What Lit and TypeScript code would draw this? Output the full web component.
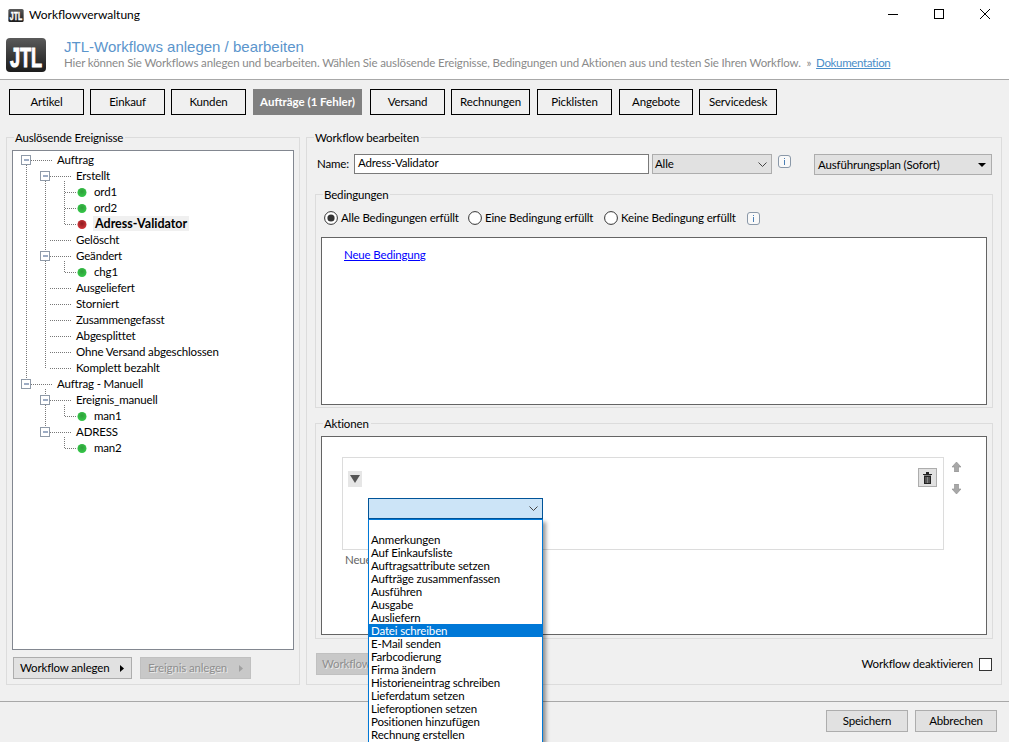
import { LitElement, html, css, svg } from "lit";
import { customElement } from "lit/decorators.js";

interface Row { t: string; l: number; dot?: "g" | "r"; bold?: boolean; }
const rows: Row[] = [
  { t: "Auftrag", l: 0 }, { t: "Erstellt", l: 1 },
  { t: "ord1", l: 2, dot: "g" }, { t: "ord2", l: 2, dot: "g" },
  { t: "Adress-Validator", l: 2, dot: "r", bold: true },
  { t: "Gelöscht", l: 1 }, { t: "Geändert", l: 1 }, { t: "chg1", l: 2, dot: "g" },
  { t: "Ausgeliefert", l: 1 }, { t: "Storniert", l: 1 }, { t: "Zusammengefasst", l: 1 },
  { t: "Abgesplittet", l: 1 }, { t: "Ohne Versand abgeschlossen", l: 1 }, { t: "Komplett bezahlt", l: 1 },
  { t: "Auftrag - Manuell", l: 0 }, { t: "Ereignis_manuell", l: 1 }, { t: "man1", l: 2, dot: "g" },
  { t: "ADRESS", l: 1 }, { t: "man2", l: 2, dot: "g" },
];
const expanders: [number, number][] = [[13, 9], [32, 25], [32, 105], [13, 233], [32, 249], [32, 281]];
const tabs = ["Artikel", "Einkauf", "Kunden", "Aufträge (1 Fehler)", "Versand", "Rechnungen", "Picklisten", "Angebote", "Servicedesk"];
const tabW = [75, 75, 75, 109, 75, 79, 75, 74, 78];
const tabGap = [0, 6, 6, 7, 8, 6, 7, 7, 6];
const items = ["", "Anmerkungen", "Auf Einkaufsliste", "Auftragsattribute setzen", "Aufträge zusammenfassen", "Ausführen", "Ausgabe", "Ausliefern", "Datei schreiben", "E-Mail senden", "Farbcodierung", "Firma ändern", "Historieneintrag schreiben", "Lieferdatum setzen", "Lieferoptionen setzen", "Positionen hinzufügen", "Rechnung erstellen"];

const logo = (w: number, h: number) => html`<svg width=${w} height=${h} viewBox="0 0 40 34">
  <defs><linearGradient id="lg" x1="0" y1="0" x2="0" y2="1"><stop offset="0" stop-color="#5a5a5a"/><stop offset=".5" stop-color="#3a3a3a"/><stop offset="1" stop-color="#1c1c1c"/></linearGradient></defs>
  <rect width="40" height="34" rx="4" fill="url(#lg)"/>
  <text x="20" y="29" text-anchor="middle" textLength="32" lengthAdjust="spacingAndGlyphs" font-family="Liberation Sans, sans-serif" font-weight="700" font-size="28" fill="#fff" stroke="#fff" stroke-width="1">JTL</text>
</svg>`;

const info = html`<svg class="info" width="15" height="15" viewBox="0 0 15 15"><rect x="1.5" y="1.5" width="12" height="12" rx="2.5" fill="#fff" fill-opacity=".6" stroke="#8a98a8"/><rect x="7" y="4" width="1" height="1" fill="#4a7fb5"/><rect x="7" y="6" width="1" height="5" fill="#4a7fb5"/></svg>`;
const chev = html`<svg width="9" height="5" viewBox="0 0 9 5"><path d="M.5.5 4.5 4.5 8.5.5" fill="none" stroke="#444" stroke-width="1"/></svg>`;
const tri = (c: string) => html`<svg width="4" height="7" viewBox="0 0 4 7"><path d="M0 0 4 3.5 0 7Z" fill=${c}/></svg>`;
const radio = (on: boolean) => html`<svg width="14" height="14" viewBox="0 0 14 14"><circle cx="7" cy="7" r="6.4" fill="#fff" stroke="#333"/>${on ? svg`<circle cx="7" cy="7" r="3.6" fill="#333"/>` : ""}</svg>`;
const arrow = (down: boolean) => html`<svg width="9" height="10" viewBox="0 0 9 10"><path d=${down ? "M2.5 0H6.5V5H9L4.5 10 0 5H2.5Z" : "M4.5 0 9 5H6.5V10H2.5V5H0Z"} fill="#a8a8a8" stroke="#8c8c8c" stroke-width=".6"/></svg>`;

@customElement("app-root")
export class AppRoot extends LitElement {
  static styles = css`
    :host { display: block; width: 1009px; height: 742px; overflow: hidden; position: relative; background: #f0f0f0; font: 11.5px/16px Lato, sans-serif; letter-spacing: -.16px; color: #000; }
    a { color: #00f; }
    .titlebar { height: 30px; background: #fff; display: flex; align-items: center; padding-left: 8px; gap: 5px; }
    .titlebar .name { font-size: 12px; letter-spacing: 0; }
    .winbtns { margin-left: auto; display: flex; padding: 0 1px 2px 0; }
    .winbtns span { width: 46px; height: 28px; display: flex; align-items: center; justify-content: center; }
    .header { height: 49px; background: #fff; border-bottom: 1px solid #a8a8a8; display: flex; padding-left: 6px; gap: 18px; }
    .header .logo { margin-top: 8px; }
    .h1 { font: 15px/18px "Liberation Sans", sans-serif; letter-spacing: 0; color: #5b95cc; margin-top: 8px; }
    .desc { color: #8a8a8a; line-height: 15px; white-space: nowrap; letter-spacing: -.13px; margin-top: -1px; }
    .desc a { color: #4a8ec9; margin-left: 2px; letter-spacing: -.35px; }
    .tabs { display: flex; padding: 9px 0 0 9px; height: 26px; }
    .tab { box-sizing: border-box; height: 26px; border: 1px solid #000; background: #f0f0f0; display: flex; align-items: center; justify-content: center; flex: none; }
    .tab.active { background: #808080; color: #fff; border-color: #808080; font-weight: 700; letter-spacing: 0; }
    .main { display: flex; gap: 6px; padding: 22px 0 0 6px; height: 548px; }
    .group { position: relative; box-sizing: border-box; border: 1px solid #dcdcdc; }
    .legend { position: absolute; left: 7px; top: -8px; padding: 0 2px 0 1px; background: #f0f0f0; line-height: 16px; white-space: nowrap; }
    .left { width: 294px; height: 548px; padding: 12px 5px 0 5px; }
    .tree { position: relative; box-sizing: border-box; height: 500px; background: #fff; border: 1px solid #828790; padding-top: 1px; }
    .tree svg { position: absolute; left: 0; top: 0; }
    .row { position: relative; height: 16px; line-height: 16px; white-space: nowrap; }
    .row.bold { font-weight: 700; font-size: 12.5px; letter-spacing: 0; }
    .row.bold span { background: #f0f0f0; padding: 0 2px; margin-left: -1px; }
    .leftbtns { display: flex; gap: 8px; margin-top: 7px; padding-left: 1px; }
    .btn { box-sizing: border-box; height: 22px; background: #e1e1e1; border: 1px solid #adadad; display: flex; align-items: center; white-space: nowrap; overflow: hidden; }
    .btn.menu { justify-content: space-between; padding: 0 7px 0 6px; }
    .btn.off { background: #c8c8c8; border-color: #c0c0c0; color: #8f8f8f; text-shadow: 1px 1px 0 #e8e8e8; }
    .right { width: 696px; height: 548px; padding: 16px 9px 0 8px; }
    .namerow { display: flex; align-items: flex-start; height: 21px; padding-left: 2px; line-height: 20px; }
    .namerow .lbl { width: 33px; flex: none; }
    .input { box-sizing: border-box; width: 295px; height: 20px; margin-left: 4px; background: #fff; border: 1px solid #7a7a7a; padding: 0 3px; line-height: 16px; }
    .select { box-sizing: border-box; width: 120px; height: 20px; margin: 0 0 0 3px; background: #e1e1e1; border: 1px solid #adadad; display: flex; align-items: center; justify-content: space-between; padding: 0 4px 0 2px; }
    .info { flex: none; }
    .namerow .info { margin: 0 0 0 5px; }
    .plan { box-sizing: border-box; width: 178px; height: 21px; margin-left: 22px; background: #e1e1e1; border: 1px solid #adadad; display: flex; align-items: center; justify-content: space-between; padding: 0 5px 0 3px; }
    .caret { width: 0; height: 0; border: 4px solid transparent; border-top: 4px solid #000; border-bottom: 0; }
    .sub { width: 678px; margin-top: 19px; padding: 14px 5px 0 5px; }
    .cond { height: 214px; }
    .radios { display: flex; align-items: center; height: 18px; padding-left: 3px; }
    .radio { display: flex; align-items: center; gap: 3px; white-space: nowrap; flex: none; }
    .white { box-sizing: border-box; background: #fff; border: 1px solid #646464; }
    .condbox { height: 168px; margin-top: 10px; padding: 9px 0 0 22px; }
    .act { height: 216px; margin-top: 15px; }
    .actbox { height: 199px; margin-top: -2px; padding: 20px 0 0 20px; position: relative; }
    .actionrow { display: flex; gap: 8px; }
    .card { box-sizing: border-box; width: 602px; height: 93px; border: 1px solid #dcdcdc; padding: 13px 0 0 5px; display: flex; position: relative; }
    .toggle { width: 14px; height: 16px; background: #e6e6e6; display: flex; align-items: center; justify-content: center; flex: none; }
    .combo { box-sizing: border-box; width: 175px; height: 21px; margin: 27px 0 0 6px; background: #cce4f7; border: 1px solid #005499; display: flex; align-items: center; justify-content: flex-end; padding-right: 4px; }
    .trash { position: absolute; right: 6px; top: 10px; box-sizing: border-box; width: 19px; height: 19px; background: #e1e1e1; border: 1px solid #adadad; display: flex; align-items: center; justify-content: center; }
    .updown { display: flex; flex-direction: column; gap: 12px; padding-top: 5px; }
    .updown svg { display: block; }
    .neue { margin: 2px 0 0 3px; color: #666; line-height: 16px; }
    .bottomrow { display: flex; justify-content: space-between; align-items: flex-start; margin-top: 14px; padding-left: 1px; }
    .deact { display: flex; gap: 6px; align-items: center; margin-top: 3px; }
    .check { box-sizing: border-box; width: 13px; height: 13px; background: #fff; border: 1px solid #333; }
    .footer { margin-top: 16px; border-top: 1px solid #a8a8a8; display: flex; justify-content: flex-end; gap: 7px; padding: 8px 12px 0 0; }
    .footer .btn { width: 82px; justify-content: center; }
    .drop { position: absolute; left: 368px; top: 519px; box-sizing: border-box; width: 175px; height: 240px; background: #fff; border: 1px solid #0078d7; box-shadow: 3px 3px 4px rgba(0,0,0,.4); overflow: hidden; }
    .item { height: 13px; line-height: 13px; padding-left: 2px; white-space: nowrap; }
    .item.sel { background: #0078d7; color: #fff; }
  `;

  private lines() {
    const d = (x1: number, y1: number, x2: number, y2: number) => svg`<line x1=${x1} y1=${y1} x2=${x2} y2=${y2} stroke="#777" stroke-dasharray="1 1"/>`;
    const out: unknown[] = [];
    out.push(d(13.5, 14, 13.5, 229), d(32.5, 30, 32.5, 217), d(32.5, 238, 32.5, 277));
    out.push(d(51.5, 30, 51.5, 73), d(51.5, 110, 51.5, 121), d(51.5, 254, 51.5, 265), d(51.5, 286, 51.5, 297));
    rows.forEach((r, i) => {
      const y = 9.5 + i * 16;
      if (r.l === 0) out.push(d(18, y, 40, y));
      if (r.l === 1) out.push(d(37, y, 59, y));
      if (r.l === 2) out.push(d(52, y, 64, y));
    });
    expanders.forEach(([x, cy]) => {
      out.push(svg`<rect x=${x - 4.5} y=${cy - 4.5} width="9" height="9" fill="#fff" stroke="#8f9aa8"/><rect x=${x - 2} y=${cy - .5} width="5" height="1" fill="#3c5a8a"/>`);
    });
    return svg`${out}`;
  }

  render() {
    return html`
      <div class="titlebar">
        ${logo(16, 13)}
        <span class="name">Workflowverwaltung</span>
        <div class="winbtns">
          <span><svg width="10" height="1"><rect width="10" height="1" fill="#000"/></svg></span>
          <span><svg width="10" height="10"><rect x=".5" y=".5" width="9" height="9" fill="none" stroke="#000"/></svg></span>
          <span><svg width="10" height="10"><path d="M0 0 10 10M10 0 0 10" stroke="#000" fill="none"/></svg></span>
        </div>
      </div>
      <div class="header">
        <div class="logo">${logo(40, 34)}</div>
        <div>
          <div class="h1">JTL-Workflows anlegen / bearbeiten</div>
          <div class="desc">Hier können Sie Workflows anlegen und bearbeiten. Wählen Sie auslösende Ereignisse, Bedingungen und Aktionen aus und testen Sie Ihren Workflow. &nbsp;» <a href="#">Dokumentation</a></div>
        </div>
      </div>
      <div class="tabs">
        ${tabs.map((t, i) => html`<div class="tab ${i === 3 ? "active" : ""}" style="width:${tabW[i]}px;margin-left:${tabGap[i]}px">${t}</div>`)}
      </div>
      <div class="main">
        <div class="group left">
          <div class="legend">Auslösende Ereignisse</div>
          <div class="tree">
            <svg width="280" height="498">
              <defs>
                <radialGradient id="gg" cx=".5" cy=".4" r=".6"><stop offset="0" stop-color="#2f9e3a"/><stop offset="1" stop-color="#35c94a"/></radialGradient>
                <radialGradient id="rg" cx=".5" cy=".4" r=".6"><stop offset="0" stop-color="#8f1a1f"/><stop offset="1" stop-color="#d2363b"/></radialGradient>
              </defs>
              ${this.lines()}
              ${rows.map((r, i) => r.dot ? svg`<circle cx="69" cy=${9.5 + i * 16} r="4.5" fill=${r.dot === "g" ? "url(#gg)" : "url(#rg)"}/>` : "")}
            </svg>
            ${rows.map((r) => html`<div class="row ${r.bold ? "bold" : ""}" style="padding-left:${[44, 63, 81][r.l]}px"><span>${r.t}</span></div>`)}
          </div>
          <div class="leftbtns">
            <div class="btn menu" style="width:119px">Workflow anlegen ${tri("#000")}</div>
            <div class="btn menu off" style="width:111px;padding-left:7px">Ereignis anlegen ${tri("#a0a0a0")}</div>
          </div>
        </div>
        <div class="group right">
          <div class="legend">Workflow bearbeiten</div>
          <div class="namerow">
            <span class="lbl">Name:</span>
            <div class="input">Adress-Validator</div>
            <div class="select">Alle ${chev}</div>
            ${info}
            <div class="plan">Ausführungsplan (Sofort) <span class="caret"></span></div>
          </div>
          <div class="group sub cond">
            <div class="legend">Bedingungen</div>
            <div class="radios">
              <label class="radio" style="width:144px">${radio(true)} Alle Bedingungen erfüllt</label>
              <label class="radio" style="width:136px">${radio(false)} Eine Bedingung erfüllt</label>
              <label class="radio" style="width:142px">${radio(false)} Keine Bedingung erfüllt</label>
              ${info}
            </div>
            <div class="white condbox"><a href="#">Neue Bedingung</a></div>
          </div>
          <div class="group sub act">
            <div class="legend">Aktionen</div>
            <div class="white actbox">
              <div class="actionrow">
                <div class="card">
                  <div class="toggle"><svg width="10" height="8" viewBox="0 0 10 8"><path d="M0 0H10L5 8Z" fill="#555"/></svg></div>
                  <div class="combo">${chev}</div>
                  <div class="trash"><svg width="9" height="12" viewBox="0 0 9 12"><path d="M0 2H9V3H0ZM3 0H6V2H3ZM1 3.5H8V12H1Z" fill="#222"/><path d="M3 5V11M4.5 5V11M6 5V11" stroke="#ccc" stroke-width=".6"/></svg></div>
                </div>
                <div class="updown">${arrow(false)}${arrow(true)}</div>
              </div>
              <div class="neue">Neue Aktion</div>
            </div>
          </div>
          <div class="bottomrow">
            <div class="btn off" style="width:110px;padding-left:5px">Workflow testen</div>
            <div class="deact">Workflow deaktivieren <span class="check"></span></div>
          </div>
        </div>
      </div>
      <div class="footer">
        <div class="btn">Speichern</div>
        <div class="btn">Abbrechen</div>
      </div>
      <div class="drop">${items.map((t) => html`<div class="item ${t === "Datei schreiben" ? "sel" : ""}">${t}</div>`)}</div>
    `;
  }
}
